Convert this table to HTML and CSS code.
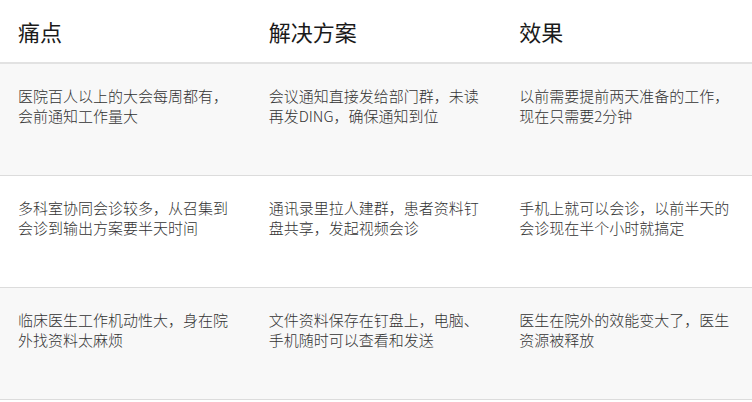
FILE: index.html
```html
<!DOCTYPE html>
<html lang="zh-CN">
<head>
<meta charset="utf-8">
<title>痛点 解决方案 效果</title>
<link rel="stylesheet" href="styles.css">
</head>
<body>
<div class="table">
  <div class="row head">
    <div class="cell">痛点</div>
    <div class="cell">解决方案</div>
    <div class="cell">效果</div>
  </div>
  <div class="row gray">
    <div class="cell">医院百人以上的大会每周都有，会前通知工作量大</div>
    <div class="cell">会议通知直接发给部门群，未读再发DING，确保通知到位</div>
    <div class="cell">以前需要提前两天准备的工作，现在只需要2分钟</div>
  </div>
  <div class="row">
    <div class="cell">多科室协同会诊较多，从召集到会诊到输出方案要半天时间</div>
    <div class="cell">通讯录里拉人建群，患者资料钉盘共享，发起视频会诊</div>
    <div class="cell">手机上就可以会诊，以前半天的会诊现在半个小时就搞定</div>
  </div>
  <div class="row gray">
    <div class="cell">临床医生工作机动性大，身在院外找资料太麻烦</div>
    <div class="cell">文件资料保存在钉盘上，电脑、手机随时可以查看和发送</div>
    <div class="cell">医生在院外的效能变大了，医生资源被释放</div>
  </div>
</div>
</body>
</html>
```
FILE: styles.css
```css
html, body {
  margin: 0;
  padding: 0;
  background: #fff;
}
body {
  font-family: "Noto Sans CJK SC", "Noto Sans", sans-serif;
  color: #333;
}
.table {
  width: 752px;
}
.row {
  display: grid;
  grid-template-columns: 1fr 1fr 1fr;
  height: 111px;
  border-bottom: 1px solid #dcdcdc;
  background: #fff;
}
.row.gray {
  background: #f8f8f8;
}
.row.head {
  height: 62px;
  align-items: center;
  border-bottom: 2px solid #e2e2e2;
}
.cell {
  padding: 22px 18px 0 18px;
  font-size: 15px;
  line-height: 20px;
  font-weight: 300;
  word-break: break-all;
}
.head .cell {
  padding: 0 18px;
  font-size: 22px;
  line-height: 30px;
  font-weight: 400;
  color: #1a1a1a;
}
```
